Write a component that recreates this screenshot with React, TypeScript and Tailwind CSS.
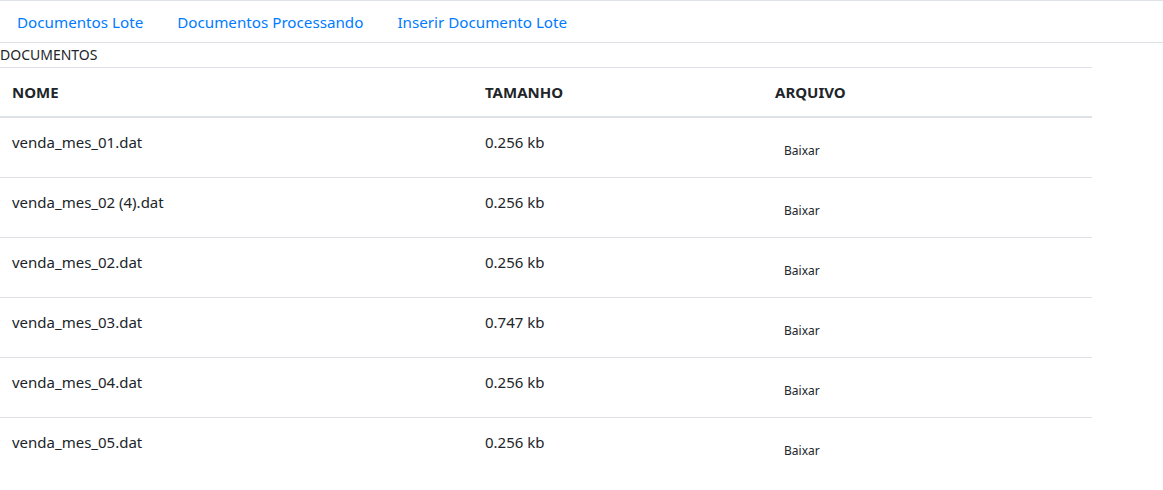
const docs = [
  { nome: "venda_mes_01.dat", tamanho: "0.256 kb" },
  { nome: "venda_mes_02 (4).dat", tamanho: "0.256 kb" },
  { nome: "venda_mes_02.dat", tamanho: "0.256 kb" },
  { nome: "venda_mes_03.dat", tamanho: "0.747 kb" },
  { nome: "venda_mes_04.dat", tamanho: "0.256 kb" },
  { nome: "venda_mes_05.dat", tamanho: "0.256 kb" },
];

const links = ["Documentos Lote", "Documentos Processando", "Inserir Documento Lote"];

export default function App() {
  return (
    <div className="min-h-screen bg-white text-[#212529] font-['Noto_Sans',sans-serif]">
      {/* nav */}
      <nav className="flex border-t border-b border-[#dee2e6]">
        {links.map((l) => (
          <a key={l} href="#" className="px-[17px] pt-[9px] pb-[7px] text-[15.2px] leading-[25px] text-[#007bff]">
            {l}
          </a>
        ))}
      </nav>
      <div className="h-6 text-[14px] leading-6">DOCUMENTOS</div>
      <table className="w-[1092px] border-collapse text-[15px]">
        <thead>
          <tr className="border-t border-[#dee2e6]">
            <th className="w-[473px] border-b-2 border-[#dee2e6] px-3 py-3 text-left font-bold leading-6">NOME</th>
            <th className="w-[290px] border-b-2 border-[#dee2e6] px-3 py-3 text-left font-bold leading-6">TAMANHO</th>
            <th className="border-b-2 border-[#dee2e6] px-3 py-3 text-left font-bold leading-6">ARQUIVO</th>
          </tr>
        </thead>
        <tbody>
          {docs.map((d, i) => (
            <tr key={d.nome} className={i > 0 ? "border-t border-[#dee2e6]" : ""}>
              <td className="px-3 py-3 align-top leading-6">{d.nome}</td>
              <td className="px-3 py-3 align-top leading-6">{d.tamanho}</td>
              <td className="px-3 py-3 align-top">
                <button className="h-[35px] px-[9px] pt-[7px] text-[12px] text-[#212529]">Baixar</button>
              </td>
            </tr>
          ))}
        </tbody>
      </table>
    </div>
  );
}
